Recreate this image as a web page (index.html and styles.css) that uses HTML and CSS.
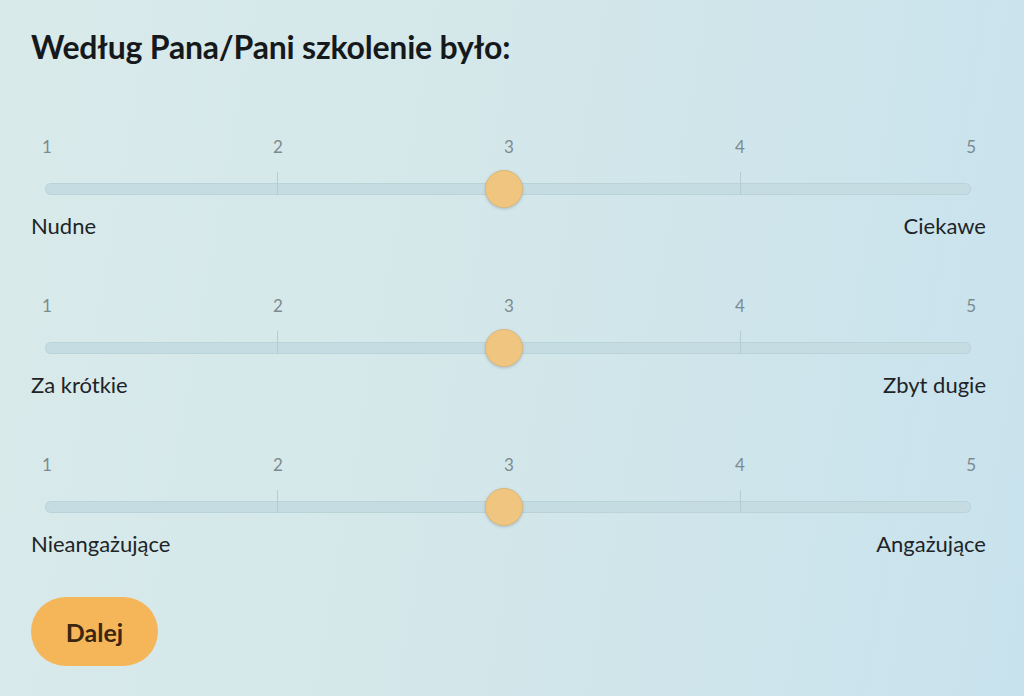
FILE: index.html
```html
<!DOCTYPE html>
<html lang="pl">
<head>
    <meta charset="UTF-8">
    <meta name="viewport" content="width=device-width, initial-scale=1.0">
    <title>Ankieta</title>
    <link rel="stylesheet" href="styles.css">
</head>
<body>
    <div class="survey">
        <h1>Według Pana/Pani szkolenie było:</h1>

        <div class="scales">
            <div class="scale">
                <div class="scale-numbers">
                    <span>1</span><span>2</span><span>3</span><span>4</span><span>5</span>
                </div>
                <div class="scale-track">
                    <span class="tick tick-2"></span>
                    <span class="tick tick-4"></span>
                    <span class="thumb"></span>
                </div>
                <div class="scale-ends">
                    <span>Nudne</span>
                    <span>Ciekawe</span>
                </div>
            </div>

            <div class="scale">
                <div class="scale-numbers">
                    <span>1</span><span>2</span><span>3</span><span>4</span><span>5</span>
                </div>
                <div class="scale-track">
                    <span class="tick tick-2"></span>
                    <span class="tick tick-4"></span>
                    <span class="thumb"></span>
                </div>
                <div class="scale-ends">
                    <span>Za krótkie</span>
                    <span>Zbyt dugie</span>
                </div>
            </div>

            <div class="scale">
                <div class="scale-numbers">
                    <span>1</span><span>2</span><span>3</span><span>4</span><span>5</span>
                </div>
                <div class="scale-track">
                    <span class="tick tick-2"></span>
                    <span class="tick tick-4"></span>
                    <span class="thumb"></span>
                </div>
                <div class="scale-ends">
                    <span>Nieangażujące</span>
                    <span>Angażujące</span>
                </div>
            </div>
        </div>

        <button class="next-btn" type="button">Dalej</button>
    </div>
</body>
</html>
```

FILE: styles.css
```css
html, body {
    height: 100%;
}

body {
    margin: 0;
    font-family: Lato, "Noto Sans", sans-serif;
    color: #1d2428;
    background: linear-gradient(100deg, #d9eaea 0%, #d3e7ea 50%, #c8e2ed 100%);
}

.survey {
    padding: 28px 38px 0 31px;
}

h1 {
    margin: 0;
    font-size: 32px;
    line-height: 38px;
    font-weight: 700;
    letter-spacing: -0.2px;
    color: #16191b;
}

.scales {
    display: flex;
    flex-direction: column;
    gap: 56px;
    margin-top: 71px;
}

.scale {
    display: flex;
    flex-direction: column;
}

.scale-numbers {
    display: flex;
    justify-content: space-between;
    padding: 0 10px 0 11px;
    font-size: 17px;
    line-height: 20px;
    color: #7d8a8f;
}

.scale-track {
    position: relative;
    height: 12px;
    margin: 26px 15px 0 14px;
    border-radius: 6px;
    background: #c5dde2;
    box-shadow: inset 0 0 0 1px rgba(150, 185, 192, 0.25);
}

/* pionowe kreski dla wartości 2 i 4 */
.tick {
    position: absolute;
    bottom: 0;
    width: 1px;
    height: 23px;
    background: #b4cdd2;
}

.tick-2 { left: 25%; }
.tick-4 { left: 75%; }

.thumb {
    position: absolute;
    top: 50%;
    left: 49.6%;
    width: 38px;
    height: 38px;
    border-radius: 50%;
    background: #f0c580;
    border: 1px solid #ddb878;
    box-sizing: border-box;
    transform: translate(-50%, -50%);
    box-shadow: 0 1px 3px rgba(90, 110, 120, 0.35);
}

.scale-ends {
    display: flex;
    justify-content: space-between;
    margin-top: 17px;
    font-size: 22px;
    line-height: 28px;
    color: #1d2428;
}

.next-btn {
    margin-top: 39px;
    width: 127px;
    height: 69px;
    border: none;
    border-radius: 35px;
    background: #f5b65a;
    font-family: Lato, "Noto Sans", sans-serif;
    font-size: 25px;
    font-weight: 700;
    color: #3b2610;
    cursor: pointer;
}
```
